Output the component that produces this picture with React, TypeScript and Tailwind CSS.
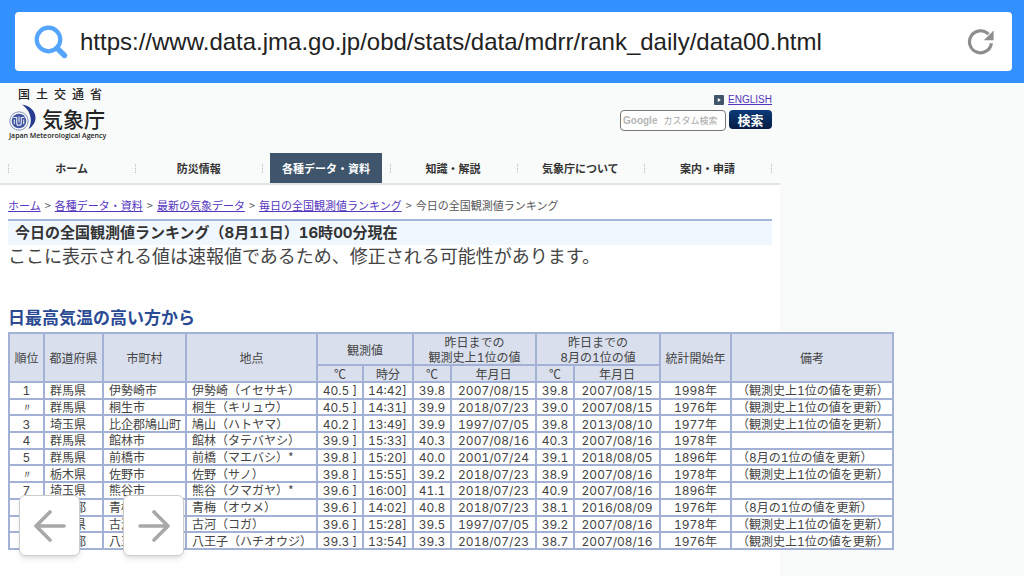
import type { ReactNode } from "react";

const navItems = ["ホーム", "防災情報", "各種データ・資料", "知識・解説", "気象庁について", "案内・申請"];
const currentNav = "各種データ・資料";

const crumbs = ["ホーム", "各種データ・資料", "最新の気象データ", "毎日の全国観測値ランキング"];

interface Row {
  rank: string;
  pref: string;
  city: string;
  station: string;
  temp: string;
  time: string;
  record: [string, string];
  august: [string, string];
  since: string;
  note: ReactNode;
}

const allTime = (
  <>
    （観測史上<Num>1</Num>位の値を更新）
  </>
);
const augustOnly = (
  <>
    （<Num>8</Num>月の<Num>1</Num>位の値を更新）
  </>
);

const rows: Row[] = [
  { rank: "1", pref: "群馬県", city: "伊勢崎市", station: "伊勢崎（イセサキ）", temp: "40.5 ]", time: "14:42]", record: ["39.8", "2007/08/15"], august: ["39.8", "2007/08/15"], since: "1998", note: allTime },
  { rank: "〃", pref: "群馬県", city: "桐生市", station: "桐生（キリュウ）", temp: "40.5 ]", time: "14:31]", record: ["39.9", "2018/07/23"], august: ["39.0", "2007/08/15"], since: "1976", note: allTime },
  { rank: "3", pref: "埼玉県", city: "比企郡鳩山町", station: "鳩山（ハトヤマ）", temp: "40.2 ]", time: "13:49]", record: ["39.9", "1997/07/05"], august: ["39.8", "2013/08/10"], since: "1977", note: allTime },
  { rank: "4", pref: "群馬県", city: "館林市", station: "館林（タテバヤシ）", temp: "39.9 ]", time: "15:33]", record: ["40.3", "2007/08/16"], august: ["40.3", "2007/08/16"], since: "1978", note: null },
  { rank: "5", pref: "群馬県", city: "前橋市", station: "前橋（マエバシ）*", temp: "39.8 ]", time: "15:20]", record: ["40.0", "2001/07/24"], august: ["39.1", "2018/08/05"], since: "1896", note: augustOnly },
  { rank: "〃", pref: "栃木県", city: "佐野市", station: "佐野（サノ）", temp: "39.8 ]", time: "15:55]", record: ["39.2", "2018/07/23"], august: ["38.9", "2007/08/16"], since: "1978", note: allTime },
  { rank: "7", pref: "埼玉県", city: "熊谷市", station: "熊谷（クマガヤ）*", temp: "39.6 ]", time: "16:00]", record: ["41.1", "2018/07/23"], august: ["40.9", "2007/08/16"], since: "1896", note: null },
  { rank: "8", pref: "東京都", city: "青梅市", station: "青梅（オウメ）", temp: "39.6 ]", time: "14:02]", record: ["40.8", "2018/07/23"], august: ["38.1", "2016/08/09"], since: "1976", note: augustOnly },
  { rank: "〃", pref: "茨城県", city: "古河市", station: "古河（コガ）", temp: "39.6 ]", time: "15:28]", record: ["39.5", "1997/07/05"], august: ["39.2", "2007/08/16"], since: "1978", note: allTime },
  { rank: "10", pref: "東京都", city: "八王子市", station: "八王子（ハチオウジ）", temp: "39.3 ]", time: "13:54]", record: ["39.3", "2018/07/23"], august: ["38.7", "2007/08/16"], since: "1976", note: allTime },
];

function Num({ children }: { children: ReactNode }) {
  return <span className="font-['Inter'] leading-none tabular-nums">{children}</span>;
}

function Th({ children, colSpan, rowSpan }: { children: ReactNode; colSpan?: number; rowSpan?: number }) {
  return (
    <th colSpan={colSpan} rowSpan={rowSpan} className="border-2 border-[#a3b1d6] bg-[#d9dfed] p-0 font-normal">
      {children}
    </th>
  );
}

function Td({ children, className = "" }: { children: ReactNode; className?: string }) {
  return <td className={`border-2 border-[#a3b1d6] bg-white p-0 ${className}`}>{children}</td>;
}

function AddressBar() {
  return (
    <header className="bg-[#3291ff] pt-3 pr-3 pb-3 pl-[15px]">
      <form className="flex h-[59px] items-center rounded-sm bg-white pr-[17px] pl-[18px]">
        <svg className="h-9 w-9 shrink-0" viewBox="0 0 36 36" fill="none" stroke="#55a5ff" aria-hidden="true">
          <circle cx="15.5" cy="15.5" r="11.8" strokeWidth="4.2" />
          <path d="M24 24 31.500 31.500" strokeWidth="5.400" strokeLinecap="round" />
        </svg>
        <input
          type="text"
          aria-label="URL"
          defaultValue="https://www.data.jma.go.jp/obd/stats/data/mdrr/rank_daily/data00.html"
          className="ml-[11px] min-w-0 flex-1 font-['Liberation_Sans',sans-serif] text-2xl text-[#222] outline-none"
        />
        <button type="button" aria-label="Reload">
          <svg className="h-7 w-7" viewBox="0 0 28 28" fill="none" aria-hidden="true">
            <path d="M24.400 15.200A11 11 0 1 1 21.500 6.200" stroke="#8e8e8e" strokeWidth="3.200" />
            <path d="M26.600 2.400v9.800H16.800z" fill="#8e8e8e" />
          </svg>
        </button>
      </form>
    </header>
  );
}

function Logo() {
  return (
    <a href="#" className="block w-[97px] text-[#222]">
      <span className="block pl-[10px] text-xs leading-3 font-medium whitespace-nowrap">{["国", "土", "交", "通", "省"].join("\u2002")}</span>
      <span className="mt-1 flex items-center justify-between">
        <svg className="h-[27px] w-7" viewBox="0 0 28 27" aria-hidden="true">
          <path d="M14 .5C29 3 32 18 20.500 25C25 17 23 7 14 .5Z" fill="#263b8f" />
          <circle cx="11" cy="17" r="9.200" fill="none" stroke="#8290bd" strokeWidth="1" />
          <circle cx="11" cy="17" r="7.300" fill="#4255a1" />
          <path d="M5.500 13.500h3.200v5.500q0 2.300 2.300 2.300t2.300-2.300v-5.500h3.200M11 12.500v6M6.300 15.500v4.500M15.700 15.500v4.500" fill="none" stroke="#e5e8f4" strokeWidth="1.100" />
        </svg>
        <span className="text-[21px] leading-6 font-medium">気象庁</span>
      </span>
      <span className="block pl-px font-['Open_Sans',sans-serif] text-[7px] leading-[10px] font-semibold whitespace-nowrap">Japan Meteorological Agency</span>
    </a>
  );
}

function SiteSearch() {
  return (
    <div className="flex flex-col items-end pt-[10px]">
      <div className="flex items-center gap-1">
        <svg className="h-[10px] w-[10px]" viewBox="0 0 10 10" aria-hidden="true">
          <rect width="10" height="10" rx="1" fill="#3e556b" />
          <path d="M3.800 3v4L6.800 5z" fill="#fff" />
        </svg>
        <a href="#" className="font-['Liberation_Sans',sans-serif] text-[10px] leading-[14px] text-[#5535c0] underline">ENGLISH</a>
      </div>
      <form className="mt-[3px] flex gap-[3px]">
        <label className="flex h-[21px] w-[106px] items-center rounded-sm border border-[#777] bg-white pl-[2px]">
          <span className="font-['Liberation_Sans',sans-serif] text-[10px] leading-4 font-bold text-[#b5b5b5]">Google</span>
          <input
            type="text"
            placeholder="カスタム検索"
            className="ml-[6px] w-0 min-w-0 flex-1 text-[9px] leading-3 outline-none placeholder:text-[#a5a5a5]"
          />
        </label>
        <button type="button" className="h-[19px] w-[43px] rounded-sm bg-linear-to-b from-[#0c3a78] to-[#061c44] text-[13px] leading-[18px] font-bold text-white">
          検索
        </button>
      </form>
    </div>
  );
}

function RankingTable() {
  return (
    <table className="h-[218px] w-[886px] table-fixed border-collapse text-xs leading-[14px] text-[#444]">
      <colgroup>
        <col className="w-[35px]" />
        <col className="w-[59px]" />
        <col className="w-[83px]" />
        <col className="w-[131px]" />
        <col className="w-[46px]" />
        <col className="w-[50px]" />
        <col className="w-[38px]" />
        <col className="w-[85px]" />
        <col className="w-[38px]" />
        <col className="w-[86px]" />
        <col className="w-[71px]" />
        <col className="w-[162px]" />
      </colgroup>
      <thead>
        <tr className="h-[32px] leading-[15px]">
          <Th rowSpan={2}>順位</Th>
          <Th rowSpan={2}>都道府県</Th>
          <Th rowSpan={2}>市町村</Th>
          <Th rowSpan={2}>地点</Th>
          <Th colSpan={2}>観測値</Th>
          <Th colSpan={2}>
            昨日までの
            <br />
            観測史上<Num>1</Num>位の値
          </Th>
          <Th colSpan={2}>
            昨日までの
            <br />
            <Num>8</Num>月の<Num>1</Num>位の値
          </Th>
          <Th rowSpan={2}>統計開始年</Th>
          <Th rowSpan={2}>備考</Th>
        </tr>
        <tr className="h-[17px]">
          <Th>℃</Th>
          <Th>時分</Th>
          <Th>℃</Th>
          <Th>年月日</Th>
          <Th>℃</Th>
          <Th>年月日</Th>
        </tr>
      </thead>
      <tbody>
        {rows.map((row) => (
          <tr key={row.station}>
            <Td className="text-center"><Num>{row.rank}</Num></Td>
            <Td className="pl-[5px]">{row.pref}</Td>
            <Td className="pl-[5px]">{row.city}</Td>
            <Td className="pl-[5px]">{row.station}</Td>
            <Td className="text-center"><Num>{row.temp}</Num></Td>
            <Td className="pr-[5px] text-right"><Num>{row.time}</Num></Td>
            <Td className="text-center"><Num>{row.record[0]}</Num></Td>
            <Td className="text-center"><Num>{row.record[1]}</Num></Td>
            <Td className="text-center"><Num>{row.august[0]}</Num></Td>
            <Td className="text-center"><Num>{row.august[1]}</Num></Td>
            <Td className="text-center"><Num>{row.since}</Num>年</Td>
            <Td className="pl-[5px] whitespace-nowrap">{row.note}</Td>
          </tr>
        ))}
      </tbody>
    </table>
  );
}

function PagerButton({ label, path }: { label: string; path: string }) {
  return (
    <button type="button" aria-label={label} className="flex h-[61px] w-[61px] items-center justify-center rounded-md border border-[#ccc] bg-white shadow-md">
      <svg className="h-8 w-8" viewBox="0 0 32 32" fill="none" stroke="#a8a8a8" strokeWidth="3.6" strokeLinecap="round" strokeLinejoin="round" aria-hidden="true">
        <path d={path} />
      </svg>
    </button>
  );
}

export default function App() {
  return (
    <div lang="ja" className="flex min-h-screen flex-col overflow-hidden bg-[#f9fbfa] font-['Noto_Sans_CJK_JP',sans-serif]">
      <AddressBar />

      <div className="flex w-full max-w-[780px] flex-1 flex-col">
        <div className="border-b-2 border-[#e2e3e3] px-2">
          <div className="flex h-[70px] justify-between">
            <div className="pt-[5px]">
              <Logo />
            </div>
            <SiteSearch />
          </div>
          <nav className="flex items-center">
            {navItems.map((item) => (
              <div key={item} className="flex h-[30px] flex-1 items-center">
                <span className="h-[9px] border-l border-dotted border-[#b5b9cc]" />
                <a
                  href="#"
                  className={`mr-2 ml-[7px] flex h-full flex-1 items-center justify-center text-[11px] font-bold whitespace-nowrap ${
                    item === currentNav ? "bg-[#3e556b] text-white" : "text-[#333]"
                  }`}
                >
                  {item}
                </a>
              </div>
            ))}
            <span className="h-[9px] border-l border-dotted border-[#b5b9cc]" />
          </nav>
        </div>

        <main className="flex-1 bg-white px-2 pt-[10px]">
          <p className="text-[11px] leading-5 whitespace-nowrap text-[#555]">
            {crumbs.map((crumb) => (
              <span key={crumb}>
                <a href="#" className="text-[#5535c0] underline">{crumb}</a>
                <span className="mx-1">&gt;</span>
              </span>
            ))}
            今日の全国観測値ランキング
          </p>
          <h1 className="mt-1 border-t-2 border-[#a3b5da] bg-[#f0f7ff] pb-[2px] pl-[7px] text-[15px] leading-[22px] font-bold text-[#333]">
            今日の全国観測値ランキング（<Num>8</Num>月<Num>11</Num>日）<Num>16</Num>時<Num>00</Num>分現在
          </h1>
          <p className="text-lg leading-5 whitespace-nowrap text-[#444]">ここに表示される値は速報値であるため、修正される可能性があります。</p>
          <h2 className="mt-10 mb-[3px] text-[17px] leading-6 font-bold text-[#2a4a94]">日最高気温の高い方から</h2>
          <RankingTable />
        </main>
      </div>

      <div className="fixed bottom-5 left-[19px] flex gap-[43px]">
        <PagerButton label="戻る" path="M30 16H2M16 2 2 16l14 14" />
        <PagerButton label="進む" path="M2 16h28M16 2l14 14-14 14" />
      </div>
    </div>
  );
}
